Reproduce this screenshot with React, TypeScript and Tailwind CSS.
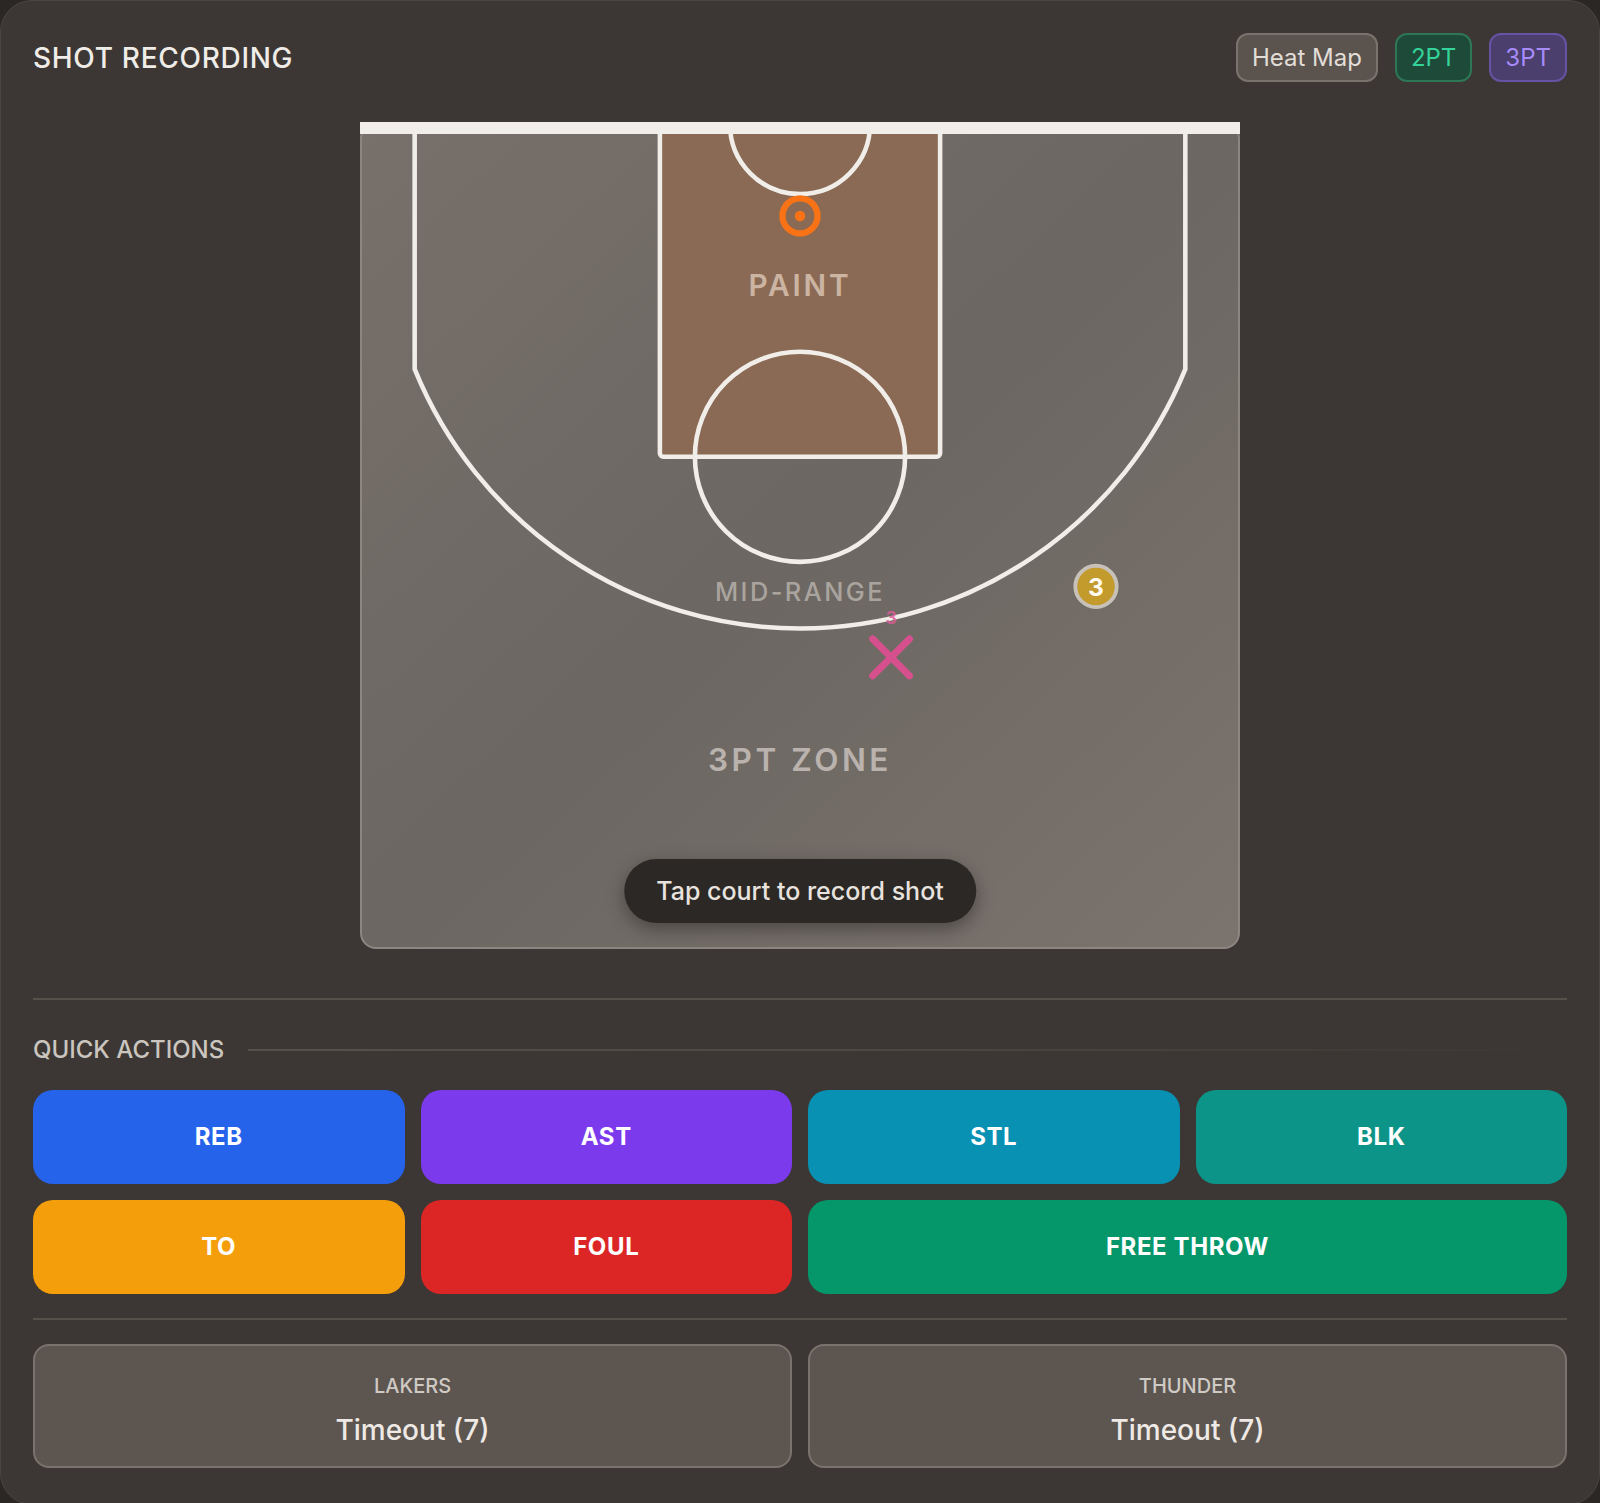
import React from 'react';

/* ── Court drawing (units: 1/10 ft, half court 500 x 470) ───── */
const LINE = '#f1eeea';

function Court() {
  return (
    <div className="relative mx-auto mt-10 aspect-[50/47] w-[880px] rounded-2xl border-2 border-[#8c8681] bg-gradient-to-br from-[#77706b] via-[#6c6762] to-[#7b736e]">
      <svg viewBox="0 0 500 470" className="block h-full w-full">
        {/* paint */}
        <rect x="170" y="-5" width="160" height="195" rx="2" fill="#8a6a54" stroke={LINE} strokeWidth="2.6" />
        {/* restricted area */}
        <path d="M 210 0 A 40 40 0 0 0 290 0" fill="none" stroke={LINE} strokeWidth="2.6" />
        {/* free throw circle */}
        <circle cx="250" cy="190" r="60" fill="none" stroke={LINE} strokeWidth="2.6" />
        {/* three point line */}
        <path d="M 30 0 L 30 140 A 237.5 237.5 0 0 0 470 140 L 470 0" fill="none" stroke={LINE} strokeWidth="2.6" />
        {/* hoop */}
        <circle cx="250" cy="52.5" r="10" fill="none" stroke="#f97316" strokeWidth="3.6" />
        <circle cx="250" cy="52.5" r="3" fill="#f97316" />

        {/* zone labels */}
        <text x="250" y="92" textAnchor="middle" dominantBaseline="central" fontSize="17" fontWeight="600" letterSpacing="1.6" fill="#ccb4a3">
          PAINT
        </text>
        <text x="250" y="267" textAnchor="middle" dominantBaseline="central" fontSize="14.5" fontWeight="500" letterSpacing="1.4" fill="#aaa49f">
          MID-RANGE
        </text>
        <text x="250" y="363" textAnchor="middle" dominantBaseline="central" fontSize="18" fontWeight="600" letterSpacing="2" fill="#bab3ad">
          3PT ZONE
        </text>

        {/* made shot marker */}
        <circle cx="419" cy="264" r="11.8" fill="#c39a2c" stroke="#c8c1ba" strokeWidth="2.2" />
        <text x="419" y="264.5" textAnchor="middle" dominantBaseline="central" fontSize="14" fontWeight="700" fill="#fffaf0">
          3
        </text>

        {/* missed shot marker */}
        <text x="302" y="282" textAnchor="middle" dominantBaseline="central" fontSize="10" fontWeight="700" fill="#dc5b97" opacity="0.85">
          3
        </text>
        <g stroke="#d6508d" strokeWidth="4" strokeLinecap="round">
          <line x1="291.5" y1="294" x2="312.5" y2="315" />
          <line x1="312.5" y1="294" x2="291.5" y2="315" />
        </g>
      </svg>

      {/* baseline */}
      <div className="absolute -left-[2px] -right-[2px] -top-[2px] h-3 bg-[#f1eeea]" />

      <div className="absolute bottom-6 left-1/2 -translate-x-1/2 whitespace-nowrap rounded-full bg-[#2b2826] px-8 py-4 text-[25px] leading-8 font-medium text-[#e8e3de] shadow-[0_6px_18px_rgba(0,0,0,0.35)]">
        Tap court to record shot
      </div>
    </div>
  );
}

const actions = [
  { label: 'REB', cls: 'bg-[#2563eb]' },
  { label: 'AST', cls: 'bg-[#7c3aed]' },
  { label: 'STL', cls: 'bg-[#0891b2]' },
  { label: 'BLK', cls: 'bg-[#0d9488]' },
  { label: 'TO', cls: 'bg-[#f59e0b]' },
  { label: 'FOUL', cls: 'bg-[#dc2626]' },
  { label: 'FREE THROW', cls: 'bg-[#059669] col-span-2' },
];

/* ── Main component ─────────────────────────────────────────── */
export default function App() {
  return (
    <div className="min-h-screen bg-[#2a2725] font-['Inter',sans-serif]">
      <div className="rounded-[32px] border border-[#4a4541] bg-[#3c3734] px-8 pt-8 pb-[36px]">
        {/* header */}
        <div className="flex items-center justify-between">
          <h1 className="text-[28px] font-medium tracking-wide text-[#f0ece8]">SHOT RECORDING</h1>
          <div className="flex items-center gap-[17px]">
            <button className="rounded-xl border-2 border-[#7a736d] bg-[#5a534e] px-[14px] py-[6.5px] text-2xl leading-8 text-[#e2ddd7]">
              Heat Map
            </button>
            <button className="rounded-xl border-2 border-[#2d7656] bg-[#1e4a3a] px-[14px] py-[6.5px] text-2xl leading-8 text-[#34d399]">
              2PT
            </button>
            <button className="rounded-xl border-2 border-[#6753a3] bg-[#4b3f6d] px-[14px] py-[6.5px] text-2xl leading-8 text-[#a78bfa]">
              3PT
            </button>
          </div>
        </div>

        <Court />

        <div className="mt-[49px] h-[2px] bg-[#57514c]" />

        {/* quick actions */}
        <div className="mt-[34px] flex items-center gap-6">
          <span className="text-2xl leading-8 font-medium text-[#cbc5bf]">QUICK ACTIONS</span>
          <div className="h-[2px] flex-1 bg-gradient-to-r from-[#57514c] via-[#4d4743] to-transparent" />
        </div>

        <div className="mt-6 grid grid-cols-4 gap-4">
          {actions.map((a) => (
            <button
              key={a.label}
              className={`${a.cls} flex h-[94px] items-center justify-center rounded-[20px] text-2xl font-bold tracking-wide text-white`}
            >
              {a.label}
            </button>
          ))}
        </div>

        <div className="mt-6 h-[2px] bg-[#57514c]" />

        {/* timeouts */}
        <div className="mt-6 grid grid-cols-2 gap-4">
          {['LAKERS', 'THUNDER'].map((team) => (
            <button
              key={team}
              className="flex h-[124px] flex-col items-center justify-center gap-3 rounded-2xl border-2 border-[#7a736d] bg-[#5c5550] pt-2"
            >
              <span className="text-xl leading-7 font-medium text-[#d0cac4]">{team}</span>
              <span className="text-[28px] leading-9 font-medium text-[#eee9e4]">Timeout (7)</span>
            </button>
          ))}
        </div>
      </div>
    </div>
  );
}
